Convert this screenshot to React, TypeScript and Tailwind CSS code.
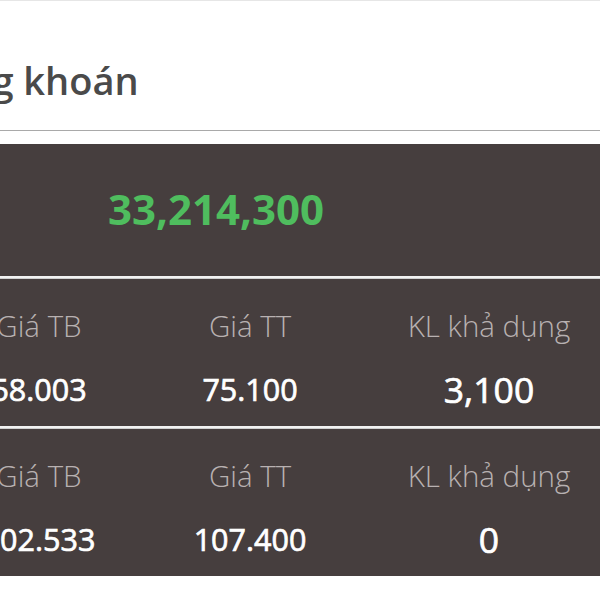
import React from "react";

const rows = [
  { tb: "58.003", tt: "75.100", kl: "3,100" },
  { tb: "102.533", tt: "107.400", kl: "0" },
];

const valueCls =
  "text-center font-normal text-white leading-[40px] mt-[25px] [-webkit-text-stroke:0.7px_#ffffff]";

export default function App() {
  return (
    <div
      className="w-[600px] h-[600px] overflow-hidden bg-white flex flex-col"
      style={{ fontFamily: '"Open Sans", "Noto Sans", sans-serif' }}
    >
      <div className="h-[1px] bg-[#e6e6e6]" />
      <div className="h-[130px] flex items-center border-b border-[#a9a9a9]">
        <span className="-ml-[107px] mt-[28px] text-[38px] font-semibold text-[#4a4a4a] whitespace-nowrap leading-none">
          Chứng khoán
        </span>
      </div>
      <div className="h-[13px]" />
      <div className="h-[132px] bg-[#463e3e] flex items-center pl-[108px]">
        <span className="text-[42px] font-bold text-[#4fbd5e] leading-none mb-[2px]">
          33,214,300
        </span>
      </div>
      {rows.map((r, i) => (
        <React.Fragment key={i}>
          <div className="h-[3px] bg-[#f2f2f2] border-b border-[#cfcfcf]" />
          <div className="h-[147px] bg-[#463e3e] -ml-[80px] grid grid-cols-[238px_184px_294px] content-start pt-[29px] whitespace-nowrap">
            <div className="text-center text-[29.5px] font-light text-[#b8b1b1] leading-[36px]">Giá TB</div>
            <div className="text-center text-[29.5px] font-light text-[#b8b1b1] leading-[36px]">Giá TT</div>
            <div className="text-center text-[29.5px] font-light text-[#b8b1b1] leading-[36px]">KL khả dụng</div>
            <div className={`${valueCls} text-[30.5px]`}>{r.tb}</div>
            <div className={`${valueCls} text-[30.5px]`}>{r.tt}</div>
            <div className={`${valueCls} text-[35.5px]`}>{r.kl}</div>
          </div>
        </React.Fragment>
      ))}
      <div className="flex-1 bg-white" />
    </div>
  );
}
